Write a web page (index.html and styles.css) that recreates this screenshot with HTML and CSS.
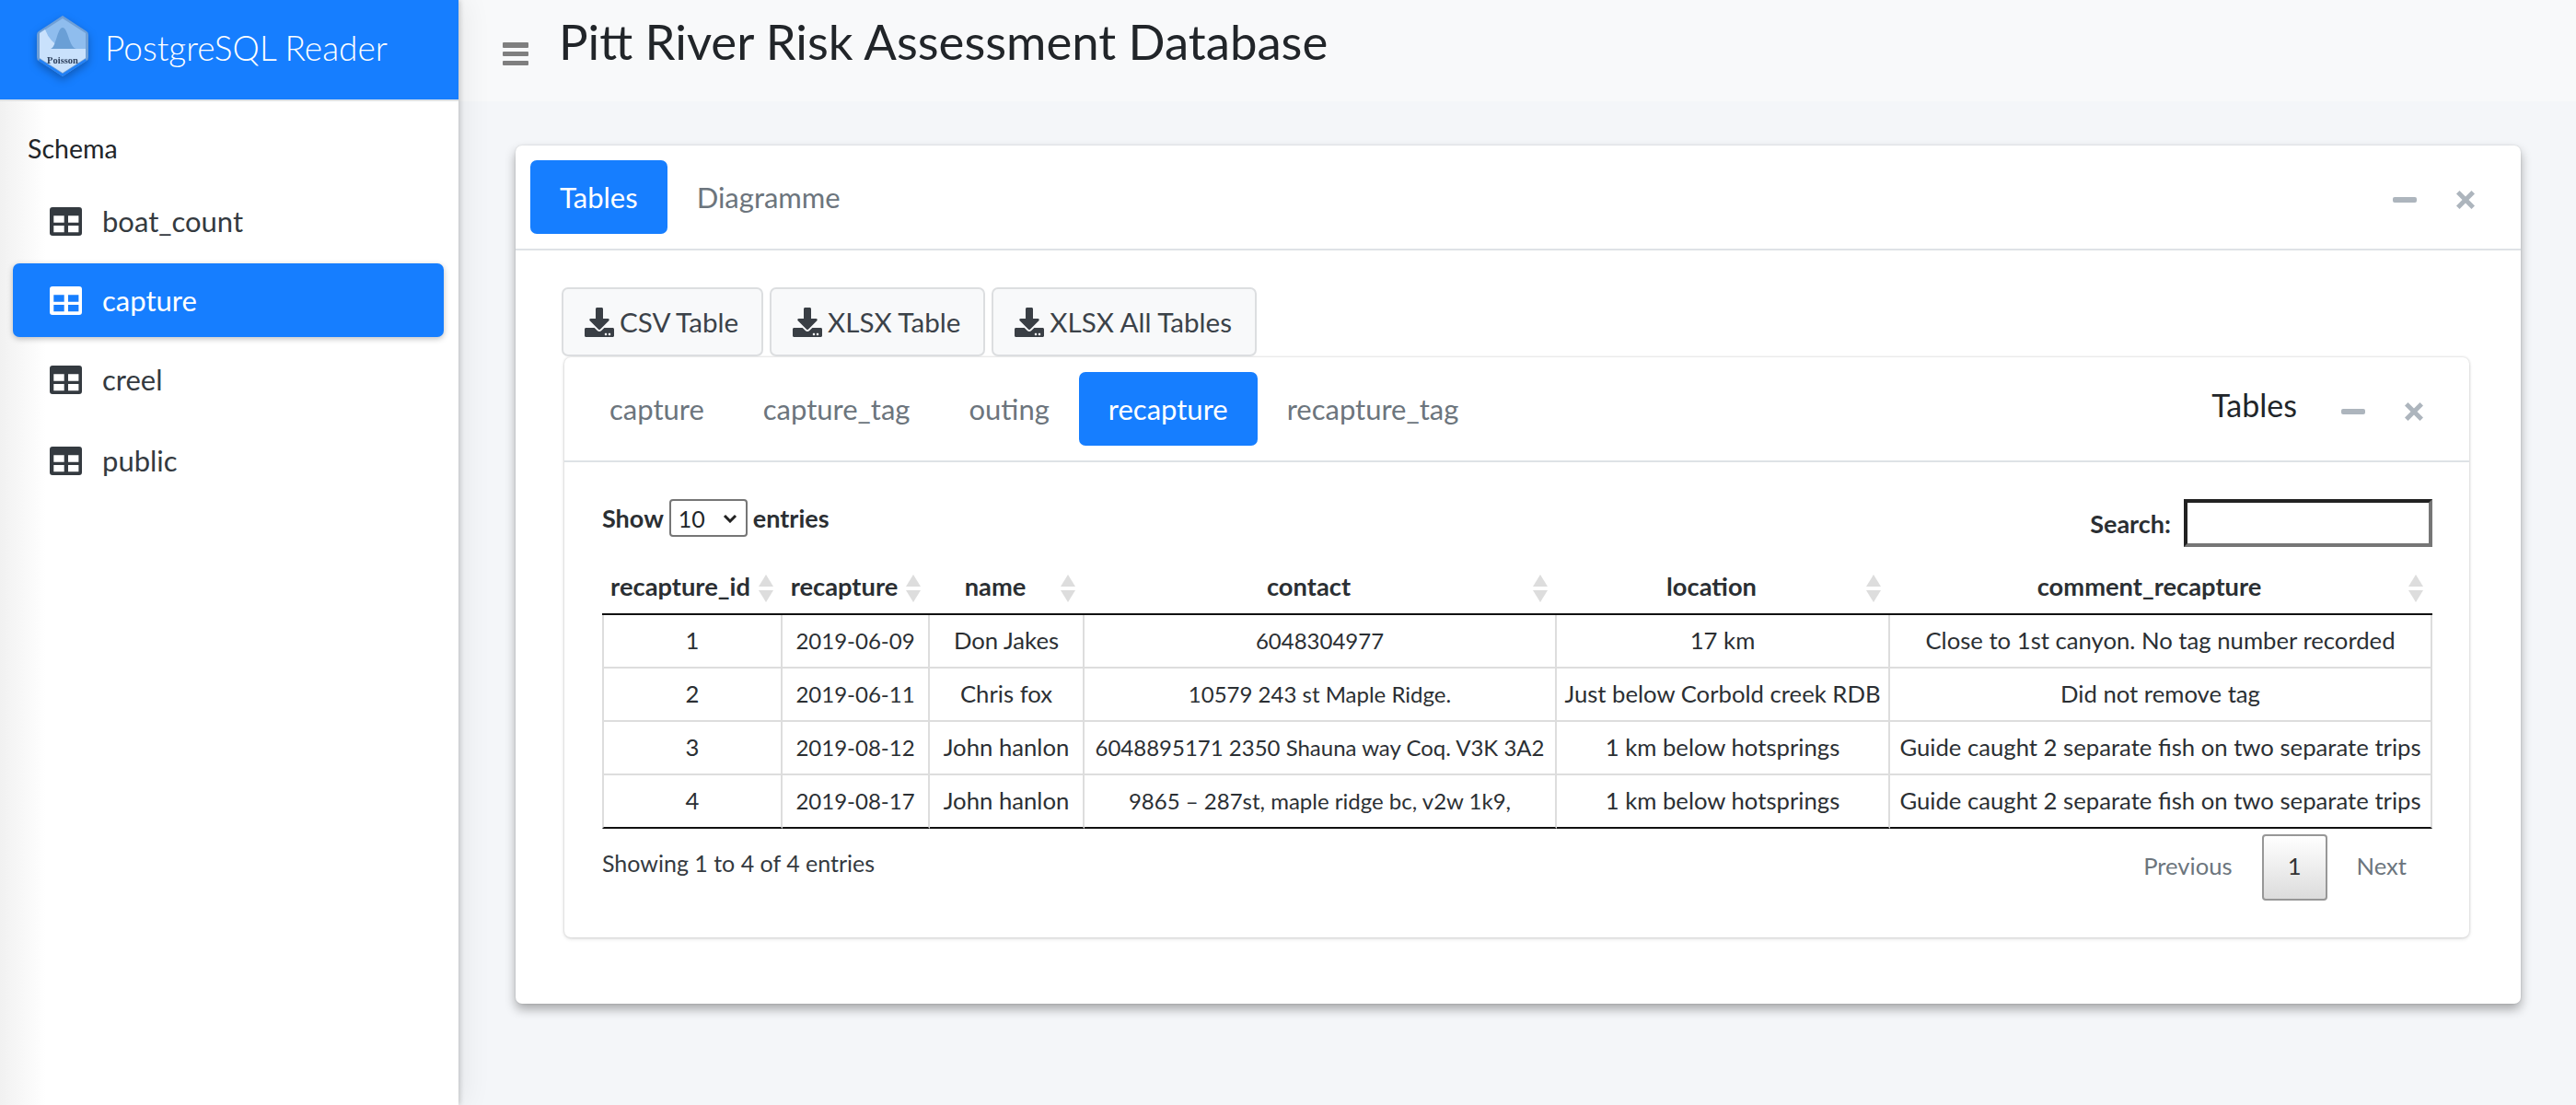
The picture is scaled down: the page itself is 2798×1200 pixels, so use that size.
FILE: index.html
```html
<!DOCTYPE html>
<html lang="en">
<head>
    <meta charset="UTF-8">
    <title>PostgreSQL Reader</title>
    <link rel="stylesheet" href="styles.css">
</head>
<body>
    <svg class="icon-defs" width="0" height="0">
        <defs>
            <path id="table-shape" fill-rule="evenodd" d="M3 0h29a3 3 0 0 1 3 3v25a3 3 0 0 1-3 3H3a3 3 0 0 1-3-3V3a3 3 0 0 1 3-3zM4.300 9.300v7.400h11.400V9.300zM20 9.300v7.400h11.400V9.300zM4.300 20v7.300h11.400V20zM20 20v7.300h11.400V20z"/>
            <path id="download-shape" d="M216 0h80c13.300 0 24 10.700 24 24v168h87.700c17.800 0 26.700 21.500 14.100 34.100L269.700 378.300c-7.500 7.500-19.800 7.500-27.300 0L90.100 226.100c-12.600-12.600-3.700-34.100 14.100-34.100H192V24c0-13.300 10.700-24 24-24zm296 376v112c0 13.300-10.700 24-24 24H24c-13.300 0-24-10.700-24-24V376c0-13.300 10.700-24 24-24h146.700l49 49c20.100 20.100 52.500 20.100 72.600 0l49-49H488c13.300 0 24 10.700 24 24zm-124 88c0-11-9-20-20-20s-20 9-20 20 9 20 20 20 20-9 20-20zm64 0c0-11-9-20-20-20s-20 9-20 20 9 20 20 20 20-9 20-20z"/>
            <path id="times-shape" d="M3.500 0L10 6.500 16.500 0 20 3.500 13.500 10 20 16.500 16.500 20 10 13.500 3.500 20 0 16.500 6.500 10 0 3.500z"/>
        </defs>
    </svg>

    <div class="app">
        <aside class="sidebar">
            <div class="brand">
                <svg class="brand-logo" viewBox="0 0 56 66">
                    <path d="M28 0L54 17Q56 18 56 21V45Q56 48 54 49L28 66L2 49Q0 48 0 45V21Q0 18 2 17z" fill="#6f9fd6"/>
                    <path d="M28 3L53 19V46L28 62L3 46V19z" fill="#8fbdee"/>
                    <path d="M3 19L9 15Q14 29 28 36L53 36V46L28 62L3 46z" fill="#c9e1fc"/>
                    <path d="M15 36C21 35 22 13 28 13S35 35 43 36z" fill="#6a9fd6"/>
                    <path d="M3 47L28 63L53 47L54 49L28 66L2 49z" fill="#1f80f8"/>
                    <text class="logo-text" x="28" y="52" text-anchor="middle">Poisson</text>
                </svg>
                <span class="brand-text">PostgreSQL Reader</span>
            </div>
            <div class="schema-label">Schema</div>
            <nav class="nav-list">
                <a class="nav-item"><svg class="table-icon" viewBox="0 0 35 31"><use href="#table-shape"/></svg>boat_count</a>
                <a class="nav-item active"><svg class="table-icon" viewBox="0 0 35 31"><use href="#table-shape"/></svg>capture</a>
                <a class="nav-item"><svg class="table-icon" viewBox="0 0 35 31"><use href="#table-shape"/></svg>creel</a>
                <a class="nav-item"><svg class="table-icon" viewBox="0 0 35 31"><use href="#table-shape"/></svg>public</a>
            </nav>
        </aside>

        <div class="main">
            <header class="topbar">
                <svg class="menu-icon" viewBox="0 0 28 25"><rect width="28" height="6" y="0" rx="1"/><rect width="28" height="5" y="10" rx="1"/><rect width="28" height="5" y="20" rx="1"/></svg>
                <h1 class="page-title">Pitt River Risk Assessment Database</h1>
            </header>

            <div class="content">
                <section class="card outer-card">
                    <div class="card-header outer-header">
                        <a class="tab active">Tables</a>
                        <a class="tab">Diagramme</a>
                        <div class="card-tools">
                            <span class="tool-minus"></span>
                            <svg class="tool-times" viewBox="0 0 20 20"><use href="#times-shape"/></svg>
                        </div>
                    </div>

                    <div class="outer-body">
                        <div class="export-buttons">
                            <button class="export-btn"><svg class="download-icon" viewBox="0 0 512 512"><use href="#download-shape"/></svg>CSV Table</button>
                            <button class="export-btn"><svg class="download-icon" viewBox="0 0 512 512"><use href="#download-shape"/></svg>XLSX Table</button>
                            <button class="export-btn"><svg class="download-icon" viewBox="0 0 512 512"><use href="#download-shape"/></svg>XLSX All Tables</button>
                        </div>

                        <section class="card inner-card">
                            <div class="card-header inner-header">
                                <a class="tab">capture</a>
                                <a class="tab">capture_tag</a>
                                <a class="tab">outing</a>
                                <a class="tab active">recapture</a>
                                <a class="tab">recapture_tag</a>
                                <span class="inner-title">Tables</span>
                                <div class="card-tools">
                                    <span class="tool-minus"></span>
                                    <svg class="tool-times" viewBox="0 0 20 20"><use href="#times-shape"/></svg>
                                </div>
                            </div>

                            <div class="inner-body">
                                <div class="table-controls">
                                    <label class="length-label">Show
                                        <select class="length-select"><option>10</option><option>25</option><option>50</option></select>
                                        entries</label>
                                    <label class="search-label">Search:<input class="search-input" type="search"></label>
                                </div>

                                <table class="data-table">
                                    <colgroup>
                                        <col class="col-id"><col class="col-date"><col class="col-name">
                                        <col class="col-contact"><col class="col-location"><col class="col-comment">
                                    </colgroup>
                                    <thead>
                                        <tr>
                                            <th>recapture_id<span class="sort-arrows"></span></th>
                                            <th>recapture<span class="sort-arrows"></span></th>
                                            <th>name<span class="sort-arrows"></span></th>
                                            <th>contact<span class="sort-arrows"></span></th>
                                            <th>location<span class="sort-arrows"></span></th>
                                            <th>comment_recapture<span class="sort-arrows"></span></th>
                                        </tr>
                                    </thead>
                                    <tbody>
                                        <tr><td>1</td><td>2019-06-09</td><td>Don Jakes</td><td>6048304977</td><td>17 km</td><td>Close to 1st canyon. No tag number recorded</td></tr>
                                        <tr><td>2</td><td>2019-06-11</td><td>Chris fox</td><td>10579 243 st Maple Ridge.</td><td>Just below Corbold creek RDB</td><td>Did not remove tag</td></tr>
                                        <tr><td>3</td><td>2019-08-12</td><td>John hanlon</td><td>6048895171 2350 Shauna way Coq. V3K 3A2</td><td>1 km below hotsprings</td><td>Guide caught 2 separate fish on two separate trips</td></tr>
                                        <tr><td>4</td><td>2019-08-17</td><td>John hanlon</td><td>9865 – 287st, maple ridge bc, v2w 1k9,</td><td>1 km below hotsprings</td><td>Guide caught 2 separate fish on two separate trips</td></tr>
                                    </tbody>
                                </table>

                                <div class="table-footer">
                                    <span class="table-info">Showing 1 to 4 of 4 entries</span>
                                    <div class="pagination">
                                        <a class="page-link">Previous</a>
                                        <a class="page-link current">1</a>
                                        <a class="page-link">Next</a>
                                    </div>
                                </div>
                            </div>
                        </section>
                    </div>
                </section>
            </div>
        </div>
    </div>
</body>
</html>
```

FILE: styles.css
```css
* {
    box-sizing: border-box;
}

html, body {
    margin: 0;
    height: 100%;
    overflow: hidden;
}

body {
    font-family: Lato, "Noto Sans", sans-serif;
    font-size: 27px;
    color: #212529;
    background-color: #f4f6f9;
}

.icon-defs {
    position: absolute;
}

.app {
    display: flex;
    height: 1200px;
}

/* Sidebar */
.sidebar {
    position: relative;
    z-index: 2;
    flex: 0 0 498px;
    background: linear-gradient(to right, #f1f1f1, #fff 50px);
    box-shadow: 2px 0 5px rgba(0, 0, 0, 0.16), 6px 0 30px rgba(0, 0, 0, 0.07);
}

.brand {
    display: flex;
    align-items: center;
    height: 110px;
    padding-left: 40px;
    padding-bottom: 6px;
    background-color: #167eff;
    border-bottom: 2px solid #dee2e6;
}

.brand-logo {
    width: 56px;
    height: 66px;
    margin: 0 18px 2px 0;
    filter: drop-shadow(0 4px 5px rgba(0, 0, 0, 0.28));
}

.logo-text {
    font-family: "Liberation Serif", serif;
    font-size: 10.500px;
    font-weight: bold;
    fill: #2c3f5c;
}

.brand-text {
    font-size: 37px;
    font-weight: 300;
    color: #fff;
}

.schema-label {
    padding: 34px 0 0 30px;
    height: 90px;
    font-size: 28.500px;
    color: #212529;
}

.nav-list {
    display: flex;
    flex-direction: column;
    gap: 6px;
    padding: 0 16px 0 14px;
}

.nav-item {
    display: flex;
    align-items: center;
    height: 80px;
    padding-left: 40px;
    border-radius: 7px;
    font-size: 31px;
    color: #343a40;
}

.nav-item:last-child {
    margin-top: 2px;
}

.nav-item.active {
    background-color: #167eff;
    color: #fff;
    box-shadow: 0 2px 6px rgba(0, 0, 0, 0.25);
}

.table-icon {
    width: 35px;
    height: 31px;
    margin-right: 22px;
    fill: currentColor;
}

/* Top bar */
.main {
    flex: 1;
    min-width: 0;
}

.topbar {
    display: flex;
    align-items: center;
    height: 110px;
    padding-left: 48px;
    background-color: #f8f9fa;
}

.menu-icon {
    width: 28px;
    height: 25px;
    margin: 6px 33px 0 0;
    fill: #7f7f7f;
}

.page-title {
    margin: 0 0 22px;
    font-size: 52.700px;
    font-weight: 400;
    color: #212529;
}

.content {
    padding: 48px 60px 0 62px;
}

/* Cards */
.card {
    background-color: #fff;
    border-radius: 7px;
}

.outer-card {
    padding-bottom: 72px;
    box-shadow: 0 0 2px rgba(0, 0, 0, 0.15), 0 6px 12px rgba(0, 0, 0, 0.32);
}

.inner-card {
    margin-left: 3px;
    box-shadow: 0 0 3px rgba(0, 0, 0, 0.2), 0 2px 4px rgba(0, 0, 0, 0.1);
}

.card-header {
    display: flex;
    align-items: center;
    border-bottom: 2px solid #dee2e6;
}

.outer-header {
    height: 114px;
    padding: 0 50px 0 16px;
}

.inner-header {
    height: 114px;
    padding: 0 50px 0 17px;
}

.tab {
    display: flex;
    align-items: center;
    height: 80px;
    padding: 0 32px;
    border-radius: 7px;
    font-size: 31px;
    color: #6c757d;
}

.tab.active {
    background-color: #167eff;
    color: #fff;
}

.inner-title {
    margin: 0 48px 10px auto;
    font-size: 34px;
    color: #212529;
}

.card-tools {
    display: flex;
    align-items: center;
    gap: 43px;
    margin-left: auto;
    padding-top: 6px;
}

.inner-header .card-tools {
    margin-left: 0;
}

.tool-minus {
    width: 26px;
    height: 6px;
    border-radius: 2px;
    background-color: #adb5bd;
}

.tool-times {
    width: 20px;
    height: 20px;
    fill: #adb5bd;
}

.outer-body {
    padding: 40px 56px 0 50px;
}

/* Export buttons */
.export-buttons {
    display: flex;
    gap: 7px;
    margin-bottom: 1px;
}

.export-btn {
    display: flex;
    align-items: center;
    height: 75px;
    padding: 0 25px 0 23px;
    background-color: #f8f9fa;
    border: 2px solid #dcdee0;
    border-radius: 7px;
    font-family: inherit;
    font-size: 29.600px;
    color: #3b4249;
}

.download-icon {
    width: 32px;
    height: 32px;
    margin-right: 6px;
    fill: #3a3f45;
}

/* Data table */
.inner-body {
    padding: 40px 40px 40px 41px;
}

.table-controls {
    display: flex;
    justify-content: space-between;
    height: 68px;
    font-size: 27px;
    font-weight: 700;
    color: #2b2f33;
}

.length-label {
    display: flex;
    align-items: center;
    gap: 6px;
    height: 41px;
}

.length-select {
    width: 85px;
    height: 41px;
    padding-left: 8px;
    appearance: none;
    background: #fff url("data:image/svg+xml,%3Csvg xmlns='http://www.w3.org/2000/svg' viewBox='0 0 16 10'%3E%3Cpath d='M2 2l6 6 6-6' fill='none' stroke='%23222' stroke-width='3'/%3E%3C/svg%3E") no-repeat right 9px center / 16px 10px;
    border: 2px solid #767676;
    border-radius: 4px;
    font-family: inherit;
    font-size: 25px;
    color: #212529;
}

.search-label {
    display: flex;
    align-items: center;
    gap: 14px;
    height: 52px;
}

.search-input {
    width: 270px;
    height: 52px;
    background-color: #fff;
    border-width: 4px;
    border-style: solid;
    border-color: #222 #767676 #767676 #222;
}

.data-table {
    width: 1988px;
    table-layout: fixed;
    border-spacing: 0;
    font-size: 25.700px;
    text-align: center;
}

.col-id { width: 196px; }
.col-date { width: 160px; }
.col-name { width: 168px; }
.col-contact { width: 513px; }
.col-location { width: 362px; }
.col-comment { width: 589px; }

.data-table th {
    position: relative;
    height: 58px;
    padding: 0 34px 4px 8px;
    border-bottom: 2px solid #111;
    font-size: 27.300px;
    font-weight: 700;
    white-space: nowrap;
    color: #2b2f33;
}

.sort-arrows {
    position: absolute;
    top: 14px;
    right: 10px;
    width: 16px;
    height: 30px;
}

.sort-arrows::before,
.sort-arrows::after {
    content: "";
    position: absolute;
    left: 0;
    border-left: 8px solid transparent;
    border-right: 8px solid transparent;
}

.sort-arrows::before {
    top: 0;
    border-bottom: 13px solid #ddd;
}

.sort-arrows::after {
    bottom: 0;
    border-top: 13px solid #ddd;
}

.data-table td {
    height: 58px;
    padding: 0 0 2px;
    border-top: 2px solid #ddd;
    border-right: 2px solid #ddd;
    white-space: nowrap;
    color: #2b2f33;
}

.data-table td:first-child {
    border-left: 2px solid #ddd;
}

/* the numeric columns run wide in this font */
.data-table td:nth-child(2),
.data-table td:nth-child(4) {
    font-size: 24px;
}

.data-table tbody tr:first-child td {
    height: 56px;
    border-top: 0;
}

.data-table tbody tr:last-child td {
    height: 60px;
    border-bottom: 2px solid #111;
}

/* Footer */
.table-footer {
    display: flex;
    justify-content: space-between;
    padding-top: 6px;
}

.table-info {
    padding-top: 16px;
    font-size: 25px;
    color: #343a40;
}

.pagination {
    display: flex;
    align-items: center;
    gap: 32px;
    padding-right: 28px;
}

.page-link {
    padding-bottom: 4px;
    font-size: 25.600px;
    color: #6c757d;
}

.page-link.current {
    display: flex;
    align-items: center;
    justify-content: center;
    width: 71px;
    height: 72px;
    background: linear-gradient(to bottom, #fff, #dcdcdc);
    border: 2px solid #979797;
    border-radius: 4px;
    color: #333;
}
```
